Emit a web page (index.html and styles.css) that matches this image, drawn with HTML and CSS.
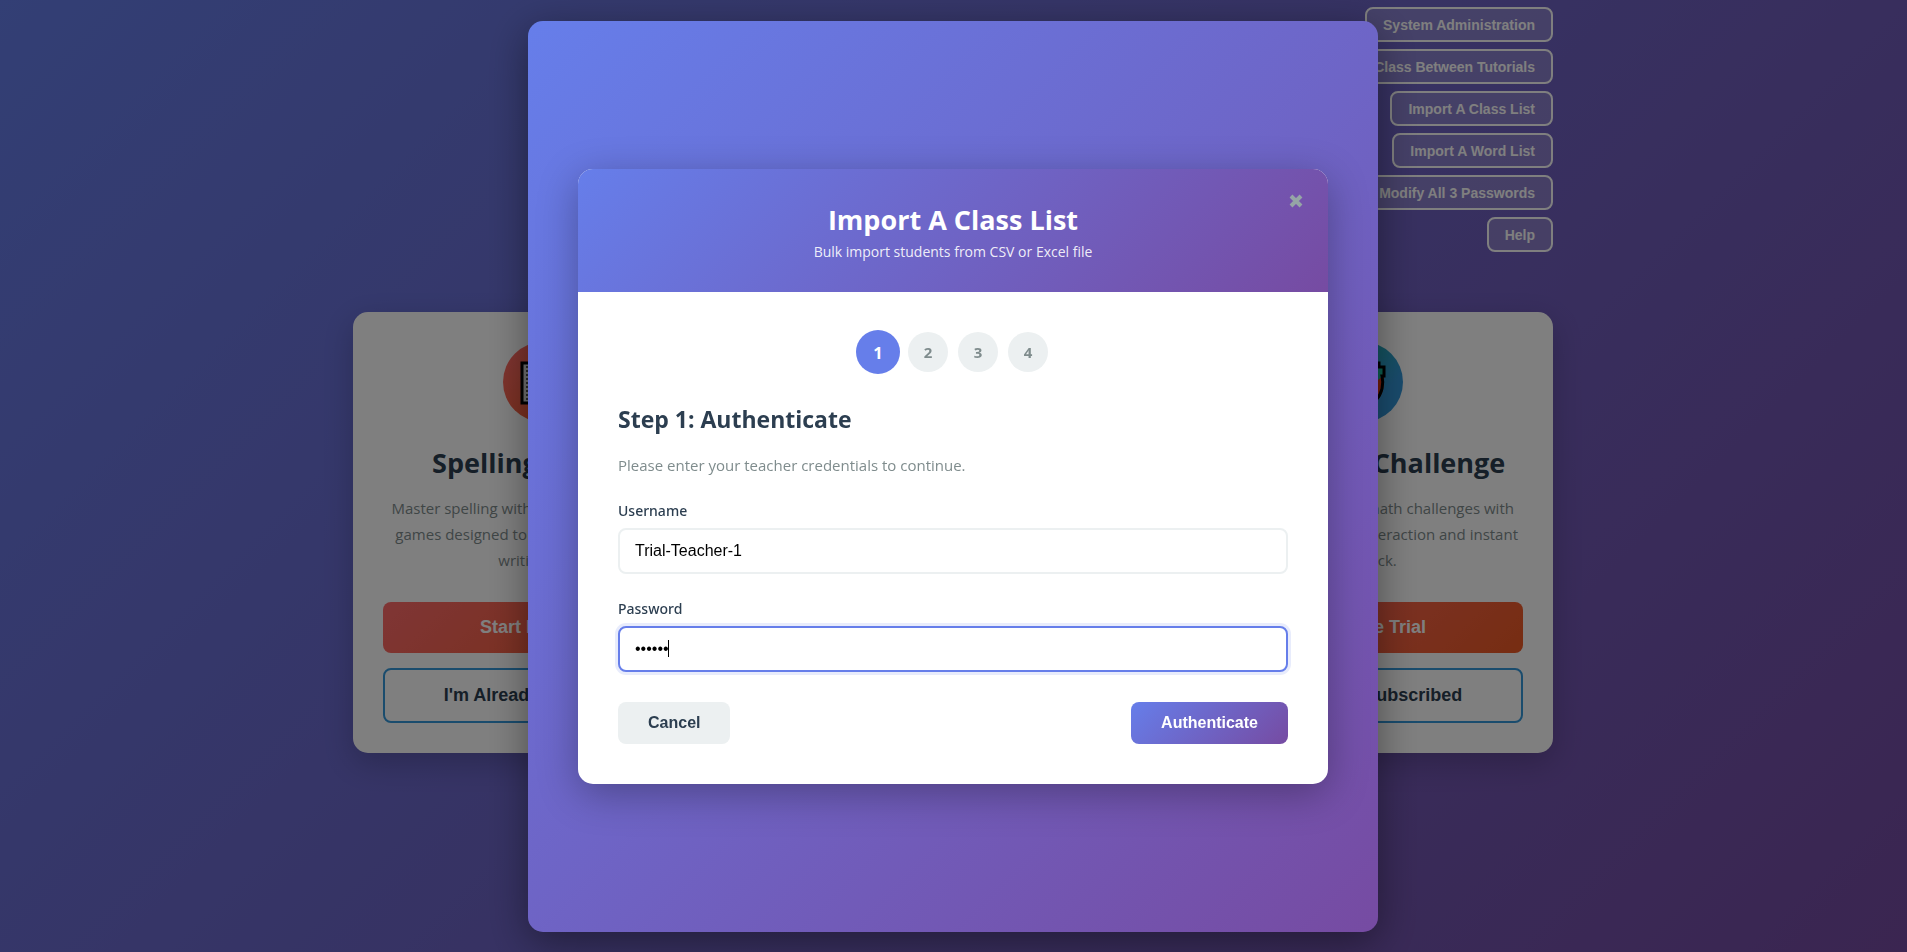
FILE: index.html
```html
<!DOCTYPE html>
<html lang="en">
<head>
  <meta charset="UTF-8">
  <meta name="viewport" content="width=device-width, initial-scale=1.0">
  <title>Import A Class List</title>
  <link rel="stylesheet" href="styles.css">
</head>
<body>
  <div class="container">
    <!-- Admin menu -->
    <nav class="admin-menu">
      <button type="button" class="admin-btn">System Administration</button>
      <button type="button" class="admin-btn">Move Class Between Tutorials</button>
      <button type="button" class="admin-btn">Import A Class List</button>
      <button type="button" class="admin-btn">Import A Word List</button>
      <button type="button" class="admin-btn">Modify All 3 Passwords</button>
      <button type="button" class="admin-btn">Help</button>
    </nav>

    <!-- Tutorial cards -->
    <div class="cards">
      <div class="card">
        <div class="card-icon spelling">
          <svg width="46" height="46" viewBox="0 0 46 46">
            <rect x="2" y="4" width="42" height="40" fill="#ddd" stroke="#000" stroke-width="3"/>
            <path d="M7 7v36" stroke="#555" stroke-width="2" stroke-dasharray="2 2"/>
            <path d="M12 12h26M12 20h26M12 28h26M12 36h26" stroke="#999" stroke-width="2"/>
          </svg>
        </div>
        <h2>Spelling Practice</h2>
        <p>Master spelling with interactive educational games designed to strengthen your child's writing skills.</p>
        <button type="button" class="btn-trial">Start Free Trial</button>
        <button type="button" class="btn-subscribed">I'm Already Subscribed</button>
      </div>
      <div class="card">
        <div class="card-icon math">
          <svg width="46" height="46" viewBox="0 0 46 46">
            <path d="M3 8h4V4h5v4h22V4h5v4h5v14c0 8-2 14-7 20H10C5 36 3 30 3 22z" fill="#e33a12"/>
            <path d="M3 8h41v8l-6 5H9l-6-5z" fill="#1abc9c"/>
            <path d="M3 8h4V4h5v4h22V4h5v4h5v9h-2c2 8 0 18-6 24H11C5 35 3 25 5 17H3z" fill="none" stroke="#000" stroke-width="3"/>
          </svg>
        </div>
        <h2>Arithmetic Challenge</h2>
        <p>Conquer entertaining math challenges with personalised student interaction and instant feedback.</p>
        <button type="button" class="btn-trial">Start Free Trial</button>
        <button type="button" class="btn-subscribed">I'm Already Subscribed</button>
      </div>
    </div>
  </div>

  <!-- Import dialog -->
  <div class="overlay">
    <div class="frame">
      <div class="modal" role="dialog" aria-labelledby="modalTitle">
        <div class="modal-header">
          <h1 id="modalTitle">Import A Class List</h1>
          <p>Bulk import students from CSV or Excel file</p>
          <button type="button" class="close-btn" aria-label="Close">
            <svg width="14" height="14" viewBox="0 0 14 14">
              <path d="M2 2l10 10M12 2L2 12" stroke="#95a5a6" stroke-width="4"/>
            </svg>
          </button>
        </div>
        <div class="modal-body">
          <div class="steps">
            <div class="step active">1</div>
            <div class="step">2</div>
            <div class="step">3</div>
            <div class="step">4</div>
          </div>
          <h2>Step 1: Authenticate</h2>
          <p class="hint">Please enter your teacher credentials to continue.</p>
          <form>
            <div class="form-group">
              <label for="username">Username</label>
              <input type="text" id="username" value="Trial-Teacher-1">
            </div>
            <div class="form-group">
              <label for="password">Password</label>
              <div class="password-field">
                <input type="password" id="password" value="secret" autofocus>
                <span class="caret"></span>
              </div>
            </div>
            <div class="actions">
              <button type="button" class="btn btn-cancel">Cancel</button>
              <button type="submit" class="btn btn-primary">Authenticate</button>
            </div>
          </form>
        </div>
      </div>
    </div>
  </div>
</body>
</html>
```
FILE: styles.css
```css
* {
  box-sizing: border-box;
  margin: 0;
  padding: 0;
}

body {
  font-family: "Segoe UI", "Open Sans", "Noto Sans", sans-serif;
  background: linear-gradient(135deg, #667eea 0%, #764ba2 100%);
  min-height: 100vh;
  padding-right: 1px;
  overflow: hidden;
}

button,
input {
  font-family: "Liberation Sans", Arial, sans-serif;
  font-size: 16px;
}

button {
  cursor: pointer;
}

.container {
  max-width: 1200px;
  margin: 0 auto;
  padding-top: 7px;
}

.admin-menu {
  display: flex;
  flex-direction: column;
  align-items: flex-end;
  gap: 7px;
}

.admin-btn {
  height: 35px;
  padding: 0 16px;
  border: 2px solid #fff;
  border-radius: 8px;
  background: rgba(255, 255, 255, 0.2);
  color: #fff;
  font-size: 14px;
  font-weight: bold;
}

.cards {
  display: flex;
  justify-content: space-between;
  margin-top: 60px;
}

.card {
  width: 380px;
  padding: 30px;
  border-radius: 15px;
  background: #fff;
  box-shadow: 0 10px 30px rgba(0, 0, 0, 0.2);
  text-align: center;
}

.card-icon {
  display: flex;
  align-items: center;
  justify-content: center;
  width: 80px;
  height: 80px;
  margin: 0 auto 20px;
  border-radius: 50%;
}

.spelling {
  background: linear-gradient(135deg, #ff6b6b, #ee5a24);
}

.math {
  background: linear-gradient(135deg, #1abc9c, #3498db 70%);
}

.card h2 {
  margin-bottom: 11px;
  color: #2c3e50;
  font-size: 27px;
  line-height: 42px;
}

.card p {
  margin-bottom: 29px;
  color: #7f8c8d;
  font-size: 15px;
  line-height: 26px;
}

.card button {
  display: block;
  width: 100%;
  border-radius: 8px;
  font-size: 18px;
  font-weight: bold;
}

.btn-trial {
  height: 51px;
  margin-bottom: 15px;
  border: none;
  background: linear-gradient(135deg, #ff6b6b, #ee5a24);
  color: #fff;
}

.card .btn-subscribed {
  height: 55px;
  border: 2px solid #3498db;
  background: transparent;
  color: #2c3e50;
}

.overlay {
  position: fixed;
  inset: 0;
  display: flex;
  align-items: center;
  justify-content: center;
  padding: 21px 21px 20px 20px;
  background: rgba(0, 0, 0, 0.5);
}

.frame {
  display: flex;
  align-items: center;
  justify-content: center;
  width: 850px;
  height: 100%;
  border-radius: 15px;
  background: linear-gradient(135deg, #667eea 0%, #764ba2 100%);
  box-shadow: 0 10px 40px rgba(0, 0, 0, 0.4);
}

.modal {
  width: 750px;
  overflow: hidden;
  border-radius: 15px;
  background: #fff;
  box-shadow: 0 10px 40px rgba(0, 0, 0, 0.3);
}

.modal-header {
  position: relative;
  padding: 30px;
  background: linear-gradient(135deg, #667eea 0%, #764ba2 100%);
  color: #fff;
  text-align: center;
}

.modal-header h1 {
  font-size: 27px;
  line-height: 42px;
}

.modal-header p {
  color: rgba(255, 255, 255, 0.9);
  font-size: 14px;
  line-height: 21px;
}

.close-btn {
  position: absolute;
  top: 20px;
  right: 20px;
  display: flex;
  align-items: center;
  justify-content: center;
  width: 24px;
  height: 24px;
  border: none;
  background: none;
}

.modal-body {
  padding: 40px;
}

.steps {
  display: flex;
  justify-content: center;
  gap: 10px;
  margin-bottom: 29px;
}

.step {
  display: flex;
  align-items: center;
  justify-content: center;
  width: 40px;
  height: 40px;
  border-radius: 50%;
  background: #ecf0f1;
  color: #7f8c8d;
  font-size: 15px;
  font-weight: bold;
}

.step.active {
  background: #667eea;
  color: #fff;
  transform: scale(1.1);
}

.modal-body h2 {
  margin-bottom: 16px;
  color: #2c3e50;
  font-size: 23px;
  line-height: 36px;
}

.hint {
  margin-bottom: 24px;
  color: #7f8c8d;
  font-size: 15px;
  line-height: 24px;
}

.form-group {
  margin-bottom: 25px;
}

.form-group label {
  display: block;
  margin-bottom: 7px;
  color: #2c3e50;
  font-family: "Segoe UI", "Noto Sans", sans-serif;
  font-size: 14px;
  font-weight: 500;
  line-height: 20px;
}

.form-group input {
  display: block;
  width: 100%;
  height: 46px;
  padding: 12px 15px;
  border: 2px solid #ecf0f1;
  border-radius: 8px;
}

.form-group input:focus {
  outline: none;
  border-color: #667eea;
  box-shadow: 0 0 0 3px rgba(102, 126, 234, 0.15);
}

.password-field {
  position: relative;
}

.password-field input {
  caret-color: transparent;
}

.caret {
  position: absolute;
  top: 14px;
  left: 50px;
  width: 1px;
  height: 17px;
  background: #000;
}

.actions {
  display: flex;
  justify-content: space-between;
  margin-top: 30px;
}

.btn {
  height: 42px;
  padding: 0 30px;
  border: none;
  border-radius: 8px;
  font-weight: bold;
}

.btn-cancel {
  background: #ecf0f1;
  color: #2c3e50;
}

.btn-primary {
  background: linear-gradient(135deg, #667eea 0%, #764ba2 100%);
  color: #fff;
}
```
